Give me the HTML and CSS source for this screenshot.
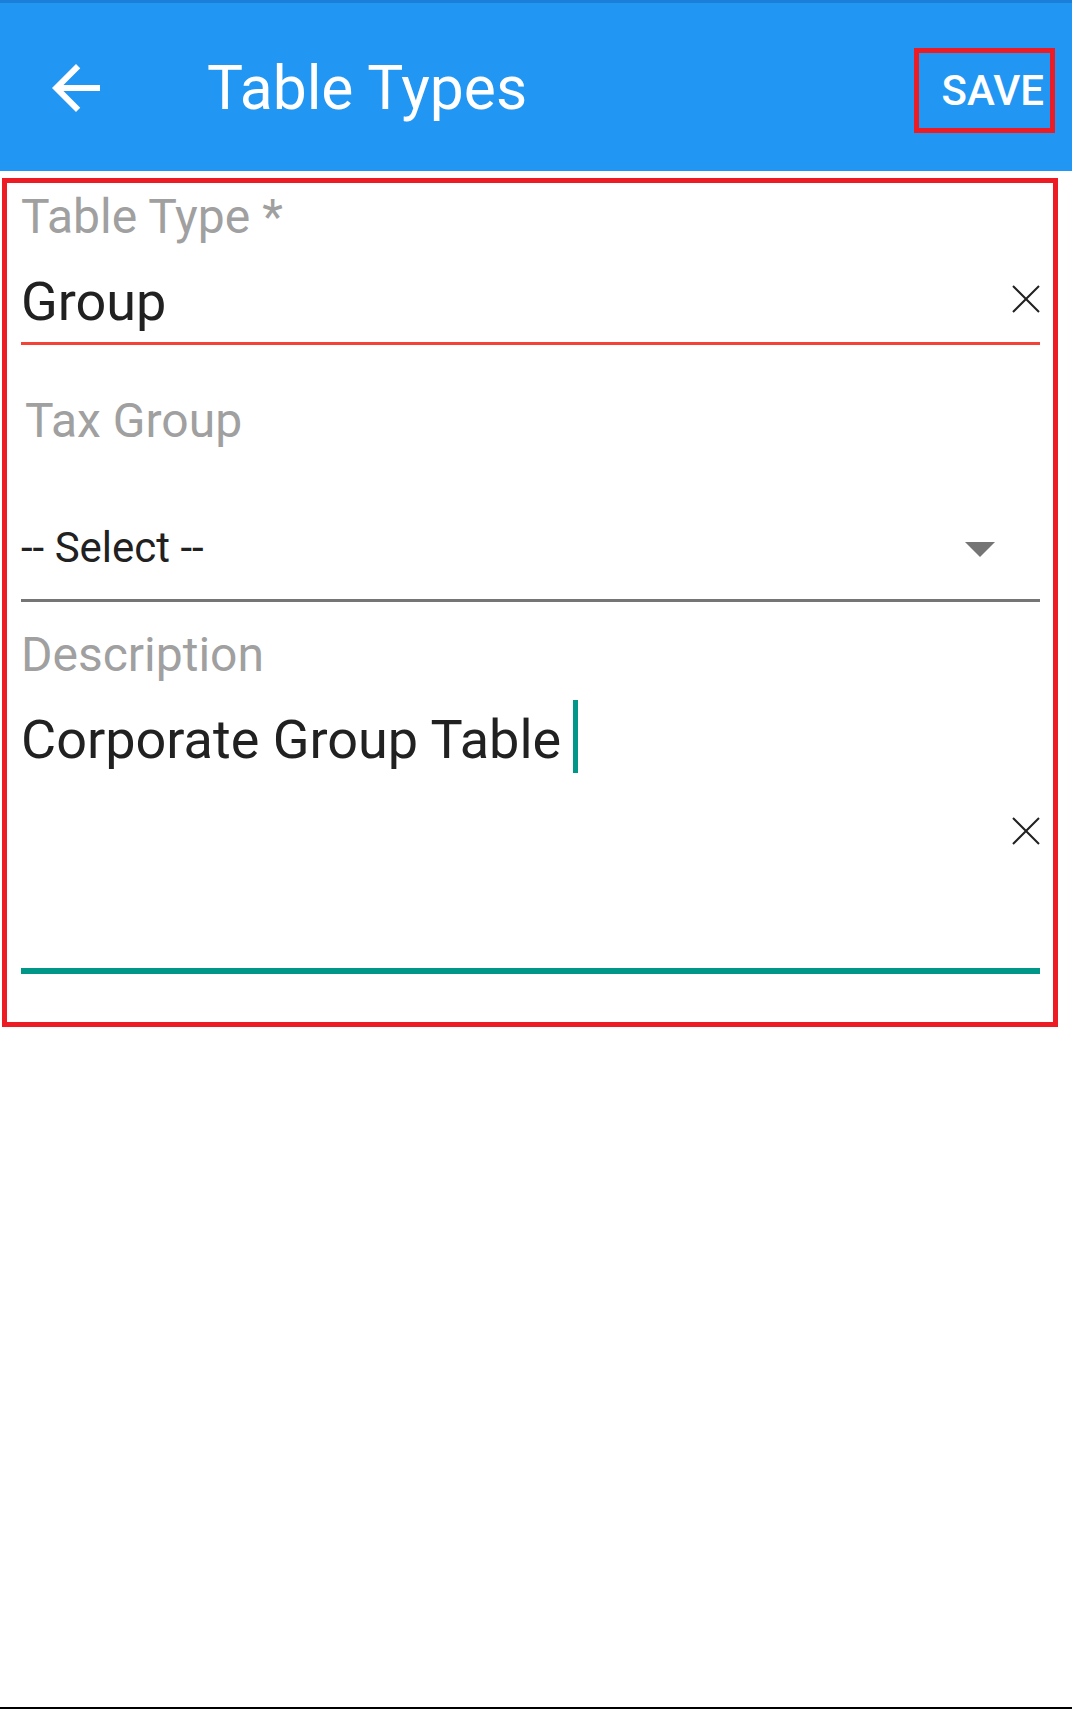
FILE: index.html
```html
<!DOCTYPE html>
<html lang="en">
<head>
  <meta charset="UTF-8">
  <title>Table Types</title>
  <link rel="stylesheet" href="styles.css">
</head>
<body>
  <div class="app-bar">
    <div class="back-btn">
      <svg width="72" height="72" viewBox="0 0 24 24">
        <path d="M20 11H7.83l5.59-5.59L12 4l-8 8 8 8 1.41-1.41L7.83 13H20v-2z" fill="#fff"/>
      </svg>
    </div>
    <div class="title">Table Types</div>
    <div class="save-box">
      <span>SAVE</span>
    </div>
  </div>

  <div class="form-box">
    <div class="label">Table Type *</div>
    <div class="input-row error">
      <div class="value">Group</div>
      <svg class="clear-icon" width="28" height="28" viewBox="0 0 28 28">
        <path d="M1 1L27 27M27 1L1 27" stroke="#212121" stroke-width="2"/>
      </svg>
    </div>

    <div class="label tax-label">Tax Group</div>
    <div class="select-row">
      <div class="select-text">-- Select --</div>
      <div class="caret"></div>
    </div>

    <div class="label desc-label">Description</div>
    <div class="textarea-row">
      <div class="textarea-text">
        <span class="value">Corporate Group Table</span>
        <span class="cursor"></span>
      </div>
      <svg class="clear-icon desc-clear" width="28" height="28" viewBox="0 0 28 28">
        <path d="M1 1L27 27M27 1L1 27" stroke="#212121" stroke-width="2"/>
      </svg>
    </div>
  </div>
</body>
</html>
```

FILE: styles.css
```css
* {
  box-sizing: border-box;
}

body {
  margin: 0;
  background: #fff;
  font-family: Roboto, "Liberation Sans", sans-serif;
  min-height: 1709px;
  border-bottom: 2px solid #000;
  width: 1072px;
}

.app-bar {
  height: 171px;
  background: #2196F3;
  border-top: 3px solid #1b7fd9;
  display: flex;
  align-items: center;
  color: #fff;
}

.back-btn {
  margin-left: 40px;
  width: 72px;
  height: 72px;
  margin-top: 2px;
}

.back-btn svg {
  display: block;
}

.title {
  margin-left: 95px;
  font-size: 60.5px;
  line-height: 72px;
  flex: 1;
  margin-top: 3px;
}

.save-box {
  width: 141px;
  height: 85px;
  border: 5px solid #ED1C24;
  margin-right: 17px;
  margin-top: 6px;
  display: flex;
  align-items: center;
  justify-content: flex-end;
  padding-right: 6px;
  font-size: 42px;
  font-weight: 500;
}

.form-box {
  margin: 7px 0 0 2px;
  width: 1056px;
  border: 5px solid #ED1C24;
  padding: 7px 13px 48px 14px;
}

.label {
  font-size: 48px;
  line-height: 54px;
  color: #a0a0a0;
}

.value {
  font-size: 54px;
  line-height: 60px;
  color: #212121;
}

.input-row {
  margin-top: 28px;
  display: flex;
  justify-content: space-between;
  align-items: flex-start;
  padding-bottom: 10px;
  border-bottom: 3px solid #757575;
}

.input-row.error {
  border-bottom-color: #F44336;
}

.clear-icon {
  display: block;
  margin-top: 13px;
}

.tax-label {
  margin-top: 49px;
  padding-left: 4px;
}

.select-row {
  margin-top: 76px;
  display: flex;
  align-items: center;
  justify-content: space-between;
  padding-bottom: 27px;
  border-bottom: 3px solid #757575;
}

.select-text {
  font-size: 42px;
  line-height: 48px;
  color: #212121;
}

.caret {
  width: 0;
  height: 0;
  border-left: 15px solid transparent;
  border-right: 15px solid transparent;
  border-top: 15px solid #757575;
  margin-right: 45px;
  margin-top: 2px;
}

.desc-label {
  margin-top: 26px;
}

.textarea-row {
  margin-top: 18px;
  height: 274px;
  display: flex;
  justify-content: space-between;
  align-items: flex-start;
  border-bottom: 6px solid #009688;
}

.textarea-text {
  display: flex;
  align-items: flex-start;
}

.textarea-text .value {
  line-height: 79px;
}

.cursor {
  width: 5px;
  height: 73px;
  background: #009688;
  margin-left: 12px;
}

.desc-clear {
  margin-top: 117px;
}
```
